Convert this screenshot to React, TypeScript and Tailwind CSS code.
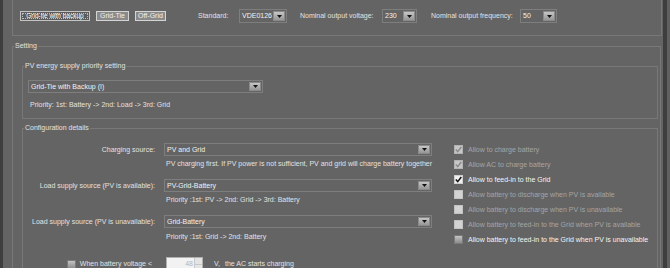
import React from 'react';

type ComboProps = { value: string; className: string };

function Arrow() {
  return (
    <div className="w-[12px] shrink-0 m-[1px] border border-[#8a8a8a] bg-gradient-to-b from-[#c6c6c6] to-[#969696] flex items-center justify-center">
      <svg width="5" height="3" viewBox="0 0 5 3">
        <path d="M0 0H5L2.5 3Z" fill="#111" />
      </svg>
    </div>
  );
}

function Combo({ value, className }: ComboProps) {
  return (
    <div className={`flex items-stretch border border-[#7e7e7e] ${className}`}>
      <span className="flex-1 flex items-center pl-[2px] text-[#f2f2f2] whitespace-nowrap">{value}</span>
      <Arrow />
    </div>
  );
}

type CheckState = 'disabledChecked' | 'checked' | 'disabled' | 'unchecked';

function CheckBox({ state }: { state: CheckState }) {
  const box =
    state === 'disabledChecked'
      ? 'bg-[#c6c6c6] border-[#b2b2b2]'
      : state === 'checked'
      ? 'bg-[#f0f0f0] border-[#cfcfcf]'
      : state === 'disabled'
      ? 'bg-[#d3d3d3] border-[#c2c2c2]'
      : 'bg-gradient-to-b from-[#c4c4c4] to-[#8c8c8c] border-[#7a7a7a]';
  return (
    <div className={`w-[9px] h-[9px] shrink-0 border flex items-center justify-center ${box}`}>
      {(state === 'checked' || state === 'disabledChecked') && (
        <svg width="7" height="7" viewBox="0 0 7 7">
          <path
            d="M0.8 3.6L2.7 5.6L6.3 1"
            fill="none"
            stroke={state === 'checked' ? '#111' : '#8c8c8c'}
            strokeWidth="1.5"
          />
        </svg>
      )}
    </div>
  );
}

const options: { label: string; state: CheckState }[] = [
  { label: 'Allow to charge battery', state: 'disabledChecked' },
  { label: 'Allow AC to charge battery', state: 'disabledChecked' },
  { label: 'Allow to feed-in to the Grid', state: 'checked' },
  { label: 'Allow battery to discharge when PV is available', state: 'disabled' },
  { label: 'Allow battery to discharge when PV is unavailable', state: 'disabled' },
  { label: 'Allow battery to feed-in to the Grid when PV is available', state: 'disabled' },
  { label: 'Allow battery to feed-in to the Grid when PV is unavailable', state: 'unchecked' },
];

export default function App() {
  return (
    <div className="w-[670px] h-[268px] overflow-hidden bg-[#646464] flex font-['Liberation_Sans',Arial,sans-serif] text-[7px] leading-[8px] text-[#e2e2e2]">
      <div className="w-[3px] shrink-0 bg-[#3e3e3e]" />

      <div className="w-[660px] shrink-0 flex flex-col">
        {/* Mode bar */}
        <div className="ml-[9px] mr-[1px] h-[36px] shrink-0 border-x border-b border-[#787878] pl-[7px] pt-[9px]">
          <div className="flex items-center h-[14px] whitespace-nowrap">
            <button className="w-[70px] h-[10px] border border-[#c4c4c4] bg-[#5c5c5c] p-[1px] text-white text-[6.5px]">
              <span className="flex h-full items-center justify-center border border-dotted border-[#bdbdbd]">
                Grid-tie with backup
              </span>
            </button>
            <button className="ml-[6px] w-[33px] h-[10px] border border-[#d4d4d4] bg-[#8a8a8a] text-[#f0f0f0] flex items-center justify-center">
              Grid-Tie
            </button>
            <button className="ml-[6px] w-[31px] h-[10px] border border-[#d4d4d4] bg-[#8a8a8a] text-[#f0f0f0] flex items-center justify-center">
              Off-Grid
            </button>
            <span className="ml-[32px] w-[41px]">Standard:</span>
            <Combo value="VDE0126" className="w-[48px] h-[14px]" />
            <span className="ml-[13px] w-[82px]">Nominal output voltage:</span>
            <Combo value="230" className="w-[35px] h-[14px]" />
            <span className="ml-[14px] w-[89px]">Nominal output frequency:</span>
            <Combo value="50" className="w-[37px] h-[14px]" />
          </div>
        </div>

        {/* Setting */}
        <fieldset className="ml-[9px] mr-[2px] mt-[6px] border border-[#787878]">
          <legend className="ml-[1px] px-[1px] leading-[8px]">Setting</legend>
          <div className="pl-[9px] pr-[2px] pb-[10px]">
            <fieldset className="mt-[12px] border border-[#787878]">
              <legend className="ml-[1px] px-[1px] leading-[8px]">PV energy supply priority setting</legend>
              <div className="pl-[5px] pt-[10px] pb-[9px]">
                <Combo value="Grid-Tie with Backup (I)" className="w-[235px] h-[13px]" />
                <div className="mt-[8px] pl-[2px] h-[8px]">Priority: 1st: Battery -&gt; 2nd: Load -&gt; 3rd: Grid</div>
              </div>
            </fieldset>

            <fieldset className="mt-[5px] border border-[#787878]">
              <legend className="ml-[1px] px-[1px] leading-[8px]">Configuration details</legend>
              <div className="flex pb-[10px] whitespace-nowrap">
                <div className="mt-[11px] flex flex-col">
                  <div className="flex items-center h-[13px]">
                    <span className="w-[132px] text-right">Charging source:</span>
                    <Combo value="PV and Grid" className="ml-[9px] w-[268px] h-[13px]" />
                  </div>
                  <div className="mt-[4px] h-[8px] pl-[143px]">
                    PV charging first. If PV power is not sufficient, PV and grid will charge battery together
                  </div>
                  <div className="mt-[11px] flex items-center h-[13px]">
                    <span className="w-[132px] text-right">Load supply source (PV is available):</span>
                    <Combo value="PV-Grid-Battery" className="ml-[9px] w-[268px] h-[13px]" />
                  </div>
                  <div className="mt-[4px] h-[8px] pl-[143px]">Priority :1st: PV -&gt; 2nd: Grid -&gt; 3rd: Battery</div>
                  <div className="mt-[11px] flex items-center h-[13px]">
                    <span className="w-[132px] text-right">Load supply source (PV is unavailable):</span>
                    <Combo value="Grid-Battery" className="ml-[9px] w-[268px] h-[13px]" />
                  </div>
                  <div className="mt-[5px] h-[8px] pl-[143px]">Priority :1st: Grid -&gt; 2nd: Battery</div>
                  <div className="mt-[16px] flex items-center h-[14px]">
                    <div className="w-[132px] flex items-center justify-end pr-[3px]">
                      <CheckBox state="unchecked" />
                      <span className="ml-[4px]">When battery voltage &lt;</span>
                    </div>
                    <div className="ml-[11px] w-[37px] h-[14px] flex border border-[#b0b0b0] bg-[#f2f2f2]">
                      <span className="flex-1 flex items-center justify-end pr-[1px] text-[#b4b4b4]">48</span>
                      <div className="w-[8px] flex flex-col border-l border-[#c8c8c8]">
                        <div className="flex-1 border-b border-[#c8c8c8] bg-[#e4e4e4]" />
                        <div className="flex-1 bg-[#e4e4e4]" />
                      </div>
                    </div>
                    <span className="ml-[11px]">V,</span>
                    <span className="ml-[5px]">the AC starts charging</span>
                  </div>
                </div>

                <div className="ml-[22px] mt-[10px] flex flex-col">
                  {options.map((o) => (
                    <div key={o.label} className="flex items-center h-[15px]">
                      <CheckBox state={o.state} />
                      <span
                        className={`ml-[5px] ${
                          o.state === 'checked' || o.state === 'unchecked' ? 'text-[#f4f4f4]' : 'text-[#a4a4a4]'
                        }`}
                      >
                        {o.label}
                      </span>
                    </div>
                  ))}
                </div>
              </div>
            </fieldset>
          </div>
        </fieldset>
      </div>

      <div className="w-[4px] shrink-0 bg-[#3e3e3e]" />
      <div className="flex-1 bg-[#606060]" />
    </div>
  );
}
